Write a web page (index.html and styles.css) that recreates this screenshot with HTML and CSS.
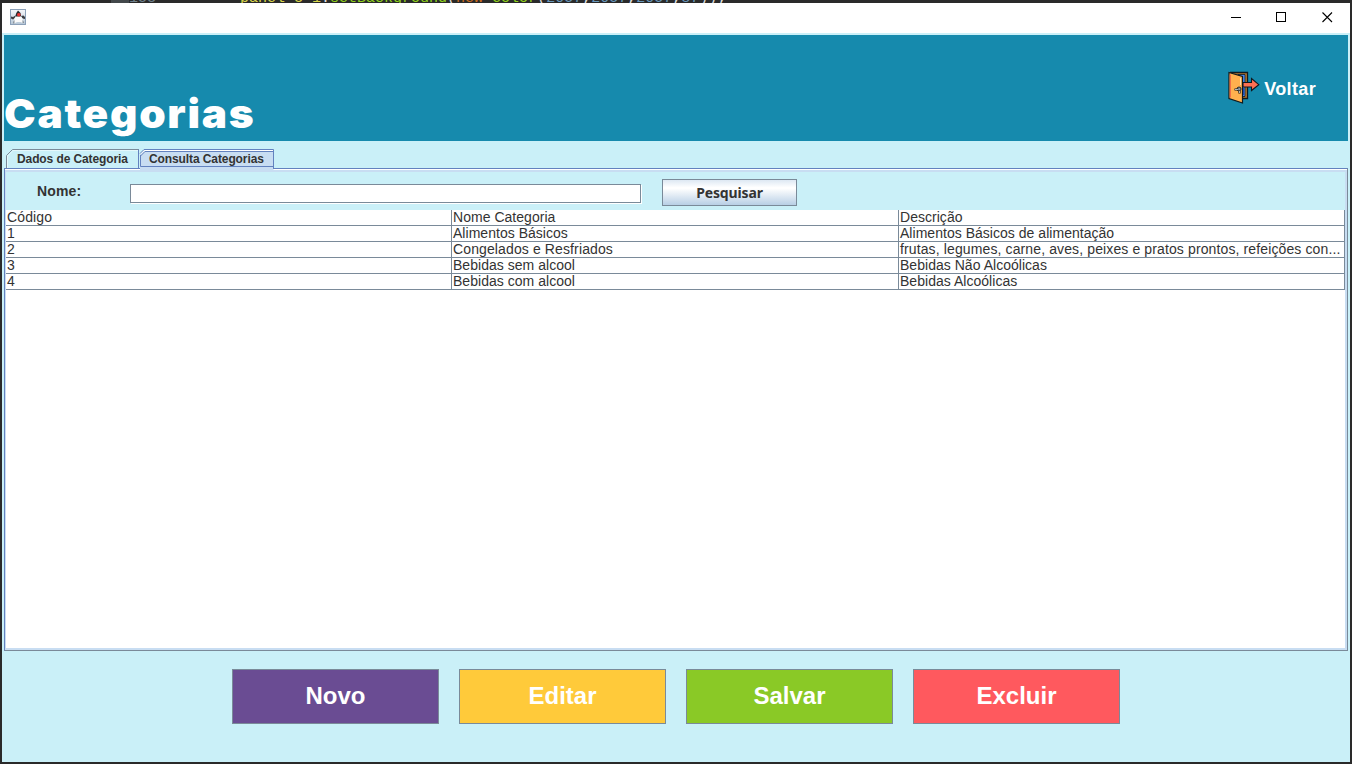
FILE: index.html
```html
<!DOCTYPE html>
<html lang="pt-BR">
<head>
<meta charset="utf-8">
<title>Categorias</title>
<link rel="stylesheet" href="styles.css">
</head>
<body>
<div class="editor-strip" aria-hidden="true"><span class="gutter"></span><span class="line-no">153</span><code class="code"><span class="var">panel_3_1</span>.<span class="fn">setBackground</span>(<span class="kw">new</span> <span class="fn">Color</span>(<span class="num">2057</span>,<span class="num">2057</span>,<span class="num">2057</span>,<span class="num">87</span>));</code></div>
<div class="window">
  <div class="titlebar">
    <svg class="app-icon" width="16" height="16" viewBox="0 0 16 16">
      <defs><linearGradient id="ig" x1="0" y1="0" x2="0" y2="1"><stop offset="0" stop-color="#f6f7fa"/><stop offset="1" stop-color="#b5c6d6"/></linearGradient></defs>
      <rect x=".5" y=".5" width="15" height="15" fill="url(#ig)" stroke="#8ba0b8"/>
      <path d="M8 1.500Q10.500 3 11 6.500L10.500 8H6L5.500 6.500Q6.500 3 8 1.500Z" fill="#25282c"/>
      <path d="M1 7.500L3 8L5.500 6.500V8.500L3 10.500L1 9.500ZM11 7L13.500 6.500L15 8V10L12.500 9.500Z" fill="#3a3e43"/>
      <path d="M4.500 9L6 7.500H11L12.500 9.500L13 14L10.500 13H7L4 14.500Z" fill="#fafafa"/>
      <path d="M3 13L4.500 11V14.500H3ZM12.500 11L14 13V14H12.500Z" fill="#8b939b"/>
      <circle cx="8.800" cy="5.800" r="1.800" fill="#e83232"/>
    </svg>
    <div class="controls">
      <svg width="10" height="10" viewBox="0 0 10 10" shape-rendering="crispEdges"><path d="M0 5h10v1H0z"/></svg>
      <svg width="10" height="10" viewBox="0 0 10 10" shape-rendering="crispEdges"><path d="M.5.5h9v9h-9z" fill="none" stroke="#000"/></svg>
      <svg width="11" height="11" viewBox="0 0 11 11"><path d="M.5.5l9.500 9.500M10 .5l-9.500 9.500" fill="none" stroke="#000" stroke-width="1.1"/></svg>
    </div>
  </div>
  <header class="header">
    <h1 class="title">Categorias</h1>
    <div class="back">
      <svg width="32" height="33" viewBox="0 0 32 33">
        <path d="M2 1.500H19.500V27.500H13" fill="#b77a32" stroke="#10191f" stroke-width="1.300"/>
        <path d="M10 3.500H17V25.500H13Z" fill="#4a8bf5" stroke="#10191f" stroke-width=".8"/>
        <path d="M15.500 17V24" stroke="#1d4fc4"/>
        <path d="M1 1.500L14.500 5.500V32L1 27.500Z" fill="#ffb04e" stroke="#10191f" stroke-width="1.200"/>
        <path d="M2.300 3.500V26.500" stroke="#ef6b4b" stroke-width="1.300"/>
        <path d="M12.500 7V14" stroke="#ffe0b0"/>
        <path d="M15 11.500H23.500V7.500L30.800 13.700L23.500 19.500V16H15Z" fill="#ff7052" stroke="#10191f" stroke-width="1.100"/>
        <circle cx="11" cy="18" r="2" fill="#8d99a2" stroke="#10191f" stroke-width=".9"/>
        <path d="M10.500 18.500H6.500M11.500 20V22.500" stroke="#10191f" stroke-width="2.200"/>
        <path d="M10.500 18.500H7M11.500 20V22" stroke="#aab5bd" stroke-width="1"/>
      </svg>
      <span class="back-text">Voltar</span>
    </div>
  </header>
  <nav class="tabs">
    <div class="tab">
      <svg class="tab-shape" width="134" height="19" viewBox="0 0 134 19"><path d="M.5 19V6.500L6.500.5H133" fill="none" stroke="#7a8a99"/><path d="M1.500 19V7L7 1.500H132" fill="none" stroke="#e4f8fc"/><path d="M132.500.5V19" stroke="#6382bf"/></svg>
      <span class="tab-text first">Dados de Categoria</span>
    </div>
    <div class="tab">
      <svg class="tab-shape" width="134" height="22" viewBox="0 0 134 22"><path d="M0 5L5 .5H133.500V22H0Z" fill="#c8ddf2"/><path d="M1 4.500L4.500 1.500H133" fill="none" stroke="#fff"/><path d="M0 4.500L4 .5H133.500V20M.5 17V7L5 2.500H133.500M.5 6V17.500H133.500" fill="none" stroke="#6382bf"/></svg>
      <span class="tab-text second">Consulta Categorias</span>
    </div>
  </nav>
  <main class="pane">
    <div class="search">
      <label class="label" for="nome">Nome:</label>
      <input class="field" id="nome" type="text">
      <button class="search-btn"><span>Pesquisar</span></button>
    </div>
    <div class="table-area">
      <div class="grid">
        <div class="wide">Código</div><div>Nome Categoria</div><div>Descrição</div>
        <div>1</div><div>Alimentos Básicos</div><div>Alimentos Básicos de alimentação</div>
        <div>2</div><div class="wide">Congelados e Resfriados</div><div class="wide">frutas, legumes, carne, aves, peixes e pratos prontos, refeições con...</div>
        <div>3</div><div>Bebidas sem alcool</div><div>Bebidas Não Alcoólicas</div>
        <div>4</div><div>Bebidas com alcool</div><div>Bebidas Alcoólicas</div>
      </div>
    </div>
  </main>
  <footer class="actions">
    <button class="action novo">Novo</button>
    <button class="action editar">Editar</button>
    <button class="action salvar">Salvar</button>
    <button class="action excluir">Excluir</button>
  </footer>
</div>
</body>
</html>
```

FILE: styles.css
```css
* { box-sizing: border-box; }
body {
  margin: 0;
  width: 1352px;
  height: 764px;
  overflow: hidden;
  background: #2a2a2a;
  font-family: "Liberation Sans", Arial, sans-serif;
  color: #333;
}
.editor-strip {
  display: flex;
  height: 3px;
  overflow: hidden;
  padding-left: 111px;
  font: 15px/16px "Liberation Mono", monospace;
  color: #ddd;
  white-space: pre;
}
.gutter { width: 18px; height: 3px; background: #43484b; }
.line-no { width: 111px; margin-top: -9px; color: #71828c; }
.code { font: inherit; margin-top: -9px; }
.var { color: #d8d54a; }
.fn { color: #8fd11c; }
.kw { color: #cc6c1d; }
.num { color: #6897bb; }
.window {
  display: flex;
  flex-direction: column;
  width: 1348px;
  height: 759px;
  margin-left: 2px;
  background: #caf0f8;
}
.titlebar {
  display: flex;
  justify-content: space-between;
  height: 30px;
  padding: 6px 17px 0 8px;
  background: #fff;
}
.controls { display: flex; gap: 35px; padding-top: 3px; }
.controls svg + svg + svg { margin-left: 1px; }
.header {
  display: flex;
  justify-content: space-between;
  height: 106px;
  margin: 2px 2px 0;
  background: #168aad;
  color: #fff;
}
.title {
  margin: 54px 0 0 0;
  font: 900 40px/50px Inter, sans-serif;
  letter-spacing: 1.6px;
  white-space: nowrap;
  transform: scaleX(1.06);
  transform-origin: 0 0;
}
.back { display: flex; gap: 4px; padding: 36px 32px 0 0; }
.back-text { font-size: 18px; font-weight: bold; line-height: 36px; letter-spacing: 0.35px; }
.tabs { display: flex; gap: 0; height: 27px; padding: 8px 0 0 4px; }
.tab { position: relative; width: 134px; height: 19px; }
.tab-shape { position: absolute; left: 0; top: 0; z-index: 1; overflow: visible; }
.tab-text {
  position: relative;
  z-index: 2;
  display: block;
  font-size: 12px;
  font-weight: bold;
  line-height: 20px;
  letter-spacing: -0.1px;
  white-space: nowrap;
}
.first { padding-left: 11px; }
.second { padding-left: 9px; }
.pane {
  height: 483px;
  margin: 0 2px;
  border: 1px solid #6382bf;
  border-bottom-color: #7a8a99;
  border-right-color: #7a8a99;
  box-shadow: inset 0 1px #fff, inset 1px 3px #c8ddf2, inset -2px -2px #c8ddf2;
}
.search { display: flex; height: 41px; padding-left: 32px; }
.label { width: 93px; padding-top: 13px; font-size: 14px; font-weight: bold; line-height: 18px; letter-spacing: 0.15px; }
.field {
  width: 511px;
  height: 19px;
  margin-top: 15px;
  padding: 0 2px;
  border: 1px solid #7a8a99;
  border-radius: 0;
  background: #fff;
  box-shadow: 1px 1px #fff;
}
.search-btn {
  width: 135px;
  height: 27px;
  margin: 10px 0 0 21px;
  padding: 0;
  border: 1px solid #7a8a99;
  background: linear-gradient(#dde8f3, #fff 30%, #fff 34%, #b8cfe5);
  color: #333;
  font: bold 14px/25px "Noto Sans", sans-serif;
  letter-spacing: -0.15px;
}
.table-area { height: 438px; margin: 0 2px 0 1px; background: #fff; }
.grid {
  display: grid;
  grid-template-columns: 446px 447px 446px;
  grid-auto-rows: 16px;
}
.grid div {
  overflow: hidden;
  padding-left: 1px;
  border-right: 1px solid #7a8a99;
  border-bottom: 1px solid #7a8a99;
  font-size: 14px;
  line-height: 15px;
  letter-spacing: 0.03px;
  white-space: nowrap;
}
.grid .wide { letter-spacing: 0.12px; }
.actions { display: flex; gap: 20px; padding: 18px 0 0 230px; }
.action {
  width: 207px;
  height: 55px;
  padding: 0 0 2px;
  border: 1px solid #7a8a99;
  color: #fff;
  font: bold 24px/50px "Liberation Sans", Arial, sans-serif;
}
.novo { background: #6a4c93; }
.editar { background: #ffca3a; }
.salvar { background: #8ac926; }
.excluir { background: #ff595e; }
```
